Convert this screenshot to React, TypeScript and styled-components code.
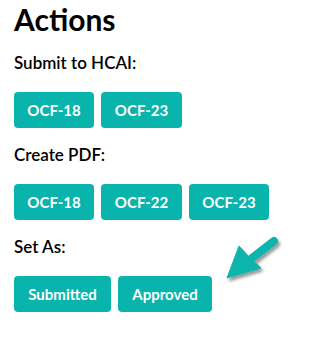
import React from "react";
import styled, { createGlobalStyle } from "styled-components";

const GlobalStyle = createGlobalStyle`
  html, body {
    margin: 0;
    padding: 0;
    background: #ffffff;
  }
  body {
    font-family: Lato, "Open Sans", "Liberation Sans", sans-serif;
    color: #000000;
  }
`;

const teal = "#08b4ab";

const Page = styled.div`
  position: relative;
  width: 295px;
  height: 338px;
  padding: 2px 14px 0 14px;
  box-sizing: border-box;
`;

const Title = styled.h2`
  margin: 0;
  font-size: 30px;
  line-height: 34px;
  font-weight: 700;
`;

const Section = styled.div`
  margin-top: 16px;
  display: flex;
  flex-direction: column;
  gap: 18px;
`;

const Label = styled.div`
  font-size: 17px;
  line-height: 22px;
  font-weight: 600;
`;

const ButtonRow = styled.div`
  display: flex;
  gap: 7px;
`;

const ActionButton = styled.button<{ $width?: number }>`
  height: 36px;
  width: ${(p) => (p.$width ? `${p.$width}px` : "auto")};
  padding: 0;
  border: none;
  border-radius: 4px;
  background: ${teal};
  color: #ffffff;
  font-family: Lato, "Open Sans", "Liberation Sans", sans-serif;
  font-size: 15px;
  font-weight: 700;
  cursor: pointer;
`;

// annotation arrow drawn over the page, pointing at the "Approved" button
const Pointer = styled.svg`
  position: absolute;
  left: 215px;
  top: 225px;
  width: 75px;
  height: 70px;
  overflow: visible;
`;

const ArrowMark = () => (
  <Pointer viewBox="215 225 75 70">
    <defs>
      <filter id="arrowShadow" x="-30%" y="-30%" width="160%" height="160%">
        <feDropShadow dx="2" dy="3" stdDeviation="1.6" floodColor="#000" floodOpacity="0.4" />
      </filter>
    </defs>
    <g filter="url(#arrowShadow)" fill={teal} stroke={teal}>
      <line x1="274" y1="241" x2="247" y2="262" strokeWidth="8" strokeLinecap="round" />
      <polygon points="227,278 239,246 249,257 261,268" strokeWidth="1" strokeLinejoin="round" />
    </g>
  </Pointer>
);

const groups = [
  { label: "Submit to HCAI:", buttons: [{ text: "OCF-18", w: 80 }, { text: "OCF-23", w: 81 }] },
  {
    label: "Create PDF:",
    buttons: [
      { text: "OCF-18", w: 80 },
      { text: "OCF-22", w: 81 },
      { text: "OCF-23", w: 80 },
    ],
  },
  { label: "Set As:", buttons: [{ text: "Submitted", w: 97 }, { text: "Approved", w: 94 }] },
];

const App: React.FC = () => {
  return (
    <Page>
      <GlobalStyle />
      <Title>Actions</Title>
      {groups.map((g) => (
        <Section key={g.label}>
          <Label>{g.label}</Label>
          <ButtonRow>
            {g.buttons.map((b) => (
              <ActionButton key={b.text} $width={b.w}>
                {b.text}
              </ActionButton>
            ))}
          </ButtonRow>
        </Section>
      ))}
      <ArrowMark />
    </Page>
  );
};

export default App;
